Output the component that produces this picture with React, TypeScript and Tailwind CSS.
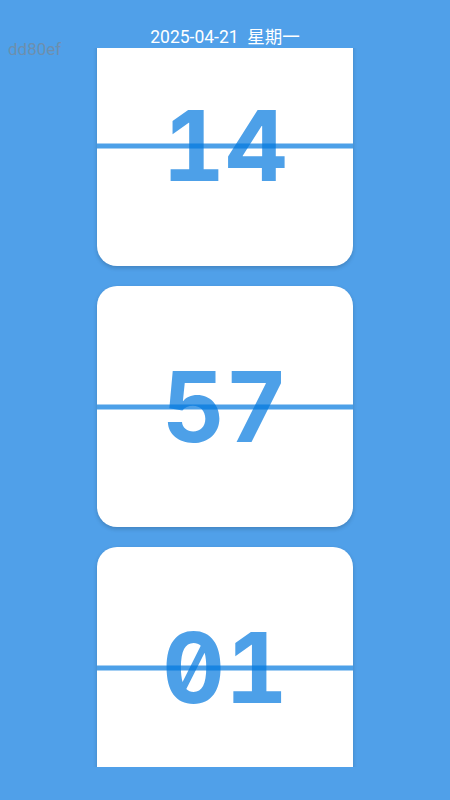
import React from "react";

const digits = ["14", "57", "01"];

function FlipCard({ value }: { value: string }) {
  return (
    <div className="relative flex h-[241px] w-[256px] shrink-0 items-center justify-center rounded-[20px] bg-white shadow-[0_2px_4px_rgba(0,0,0,0.18)]">
      <span
        className="text-[97px] font-bold leading-none text-[#0277de]/70 tabular-nums slashed-zero"
        style={{ fontFamily: 'Inter, "DejaVu Sans Mono", monospace' }}
      >
        {value}
      </span>
      <div className="absolute inset-x-0 top-1/2 h-[5px] -translate-y-1/2 bg-[#0277de]/70" />
    </div>
  );
}

export default function App() {
  return (
    <div
      className="relative flex h-[800px] w-full flex-col items-center overflow-hidden bg-[#50a0e9]"
      style={{ fontFamily: 'Roboto, "Noto Sans CJK SC", sans-serif' }}
    >
      <span className="absolute left-[8px] top-[39px] text-[17px] leading-[20px] text-[#6d8fae]">
        dd80ef
      </span>
      <div className="pt-[26px] text-[17.5px] leading-[22px] text-white">
        2025-04-21&nbsp;&nbsp;星期一
      </div>
      <div className="h-[719px] w-[266px] overflow-hidden px-[5px]">
        <div className="-mt-[23px] flex flex-col gap-[20px] pb-[6px]">
          {digits.map((d) => (
            <FlipCard key={d} value={d} />
          ))}
        </div>
      </div>
    </div>
  );
}
